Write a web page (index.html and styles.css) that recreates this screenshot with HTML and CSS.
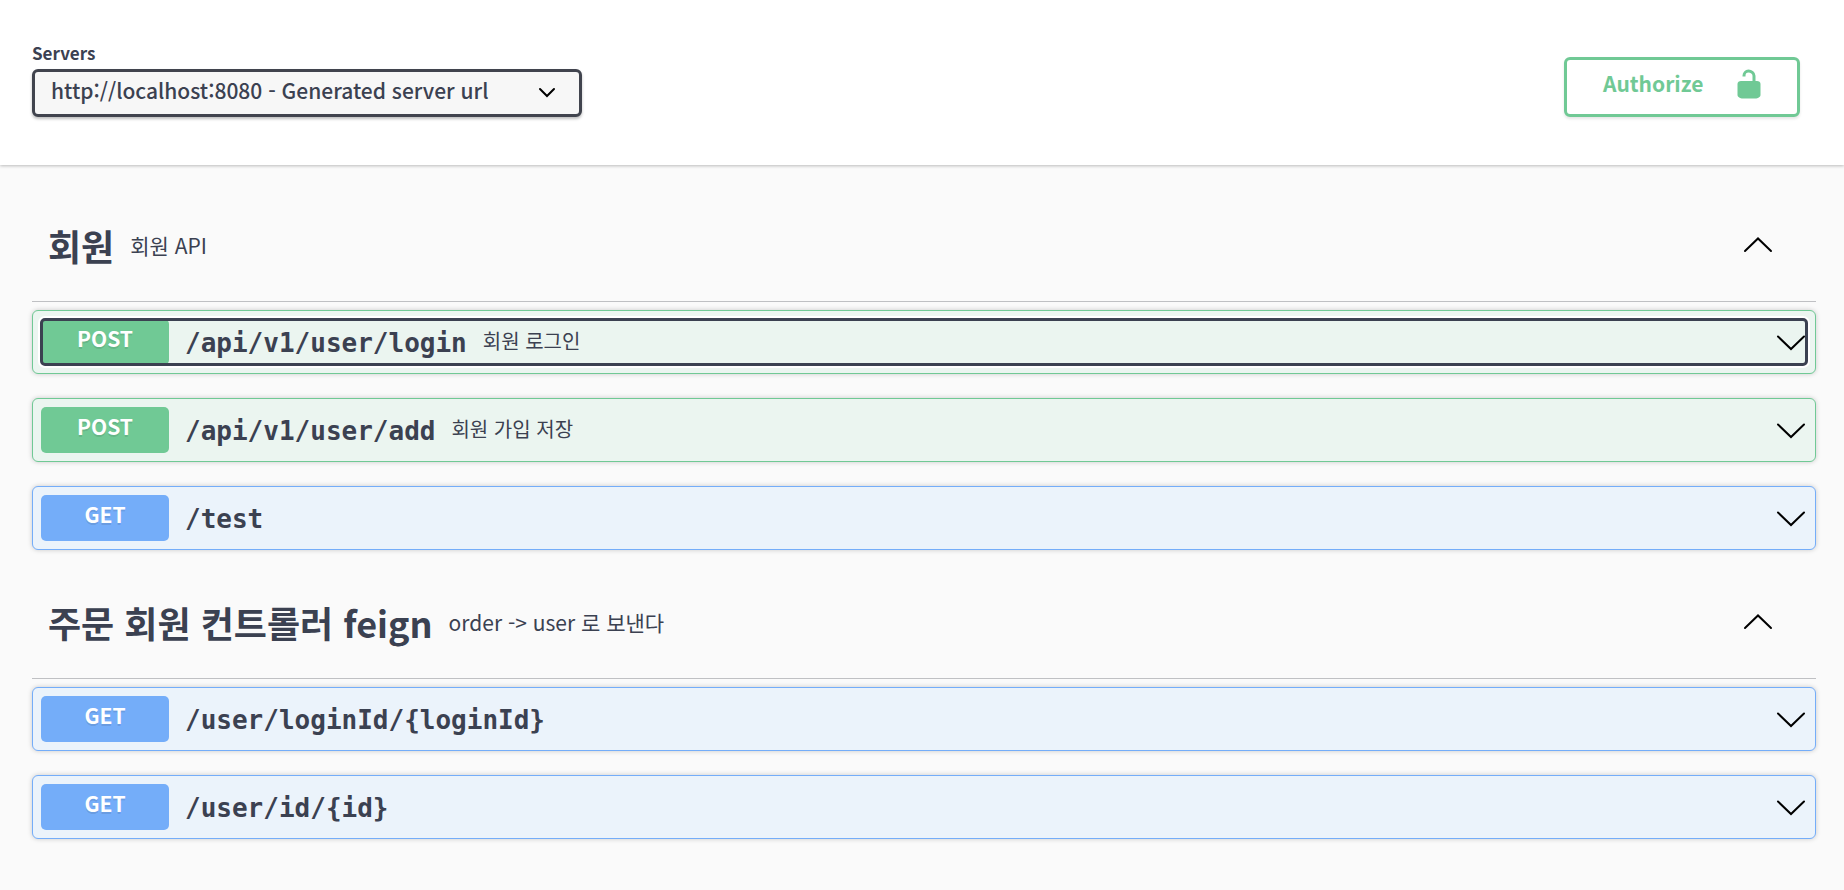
FILE: index.html
```html
<!DOCTYPE html>
<html lang="ko">
<head>
    <meta charset="utf-8">
    <meta name="viewport" content="width=device-width, initial-scale=1">
    <title>Swagger UI</title>
    <link rel="stylesheet" href="styles.css">
</head>
<body>
    <header class="scheme-container">
        <div class="servers">
            <label class="servers-title" for="servers">Servers</label>
            <select id="servers" class="servers-select">
                <option>http://localhost:8080 - Generated server url</option>
            </select>
            <svg class="select-arrow" width="18" height="12" viewBox="0 0 18 12"><path d="M2 2l7 7 7-7"/></svg>
        </div>
        <button class="authorize">
            <span>Authorize</span>
            <svg width="24" height="30" viewBox="0 0 24 30"><path class="shackle" d="M7 7.5v-.8C7 4.200 8.800 2 11.500 2S17 4.200 17 6.700V13"/><path d="M4 12h16c2 0 3.500 1 3.500 3v11c0 2-3 3.500-5 3.500h-13c-2 0-5-1.500-5-3.500V15c0-2 1.500-3 3.500-3z"/></svg>
        </button>
    </header>

    <main class="wrapper">
        <section class="tag-section">
            <h3 class="tag">
                <a href="#" class="tag-name">회원</a>
                <small>회원 API</small>
                <button class="expand" aria-label="Collapse operation"><svg class="arrow" width="30" height="18" viewBox="0 0 30 18"><path d="M2 15l13-12.500 13 12.500"/></svg></button>
            </h3>
            <div class="opblock post">
                <button class="summary focused">
                    <span class="method">POST</span>
                    <span class="path">/api/v1/user/login</span>
                    <span class="description">회원 로그인</span>
                    <svg class="arrow" width="30" height="18" viewBox="0 0 30 18"><path d="M2 3.500l13 12.500 13-12.500"/></svg>
                </button>
            </div>
            <div class="opblock post">
                <button class="summary">
                    <span class="method">POST</span>
                    <span class="path">/api/v1/user/add</span>
                    <span class="description">회원 가입 저장</span>
                    <svg class="arrow" width="30" height="18" viewBox="0 0 30 18"><path d="M2 3.500l13 12.500 13-12.500"/></svg>
                </button>
            </div>
            <div class="opblock get">
                <button class="summary">
                    <span class="method">GET</span>
                    <span class="path">/test</span>
                    <svg class="arrow" width="30" height="18" viewBox="0 0 30 18"><path d="M2 3.500l13 12.500 13-12.500"/></svg>
                </button>
            </div>
        </section>

        <section class="tag-section">
            <h3 class="tag">
                <a href="#" class="tag-name">주문 회원 컨트롤러 feign</a>
                <small>order -&gt; user 로 보낸다</small>
                <button class="expand" aria-label="Collapse operation"><svg class="arrow" width="30" height="18" viewBox="0 0 30 18"><path d="M2 15l13-12.500 13 12.500"/></svg></button>
            </h3>
            <div class="opblock get">
                <button class="summary">
                    <span class="method">GET</span>
                    <span class="path">/user/loginId/{loginId}</span>
                    <svg class="arrow" width="30" height="18" viewBox="0 0 30 18"><path d="M2 3.500l13 12.500 13-12.500"/></svg>
                </button>
            </div>
            <div class="opblock get">
                <button class="summary">
                    <span class="method">GET</span>
                    <span class="path">/user/id/{id}</span>
                    <svg class="arrow" width="30" height="18" viewBox="0 0 30 18"><path d="M2 3.500l13 12.500 13-12.500"/></svg>
                </button>
            </div>
        </section>
    </main>
</body>
</html>
```
FILE: styles.css
```css
* {
    box-sizing: border-box;
}

body {
    margin: 0;
    background: #fafafa;
    color: #3b4151;
    font-family: "Noto Sans CJK KR", "Noto Sans", sans-serif;
}

button {
    font-family: inherit;
    color: inherit;
    cursor: pointer;
}

.scheme-container {
    display: flex;
    justify-content: space-between;
    align-items: flex-start;
    padding: 40px 44px 48px 32px;
    background: #fff;
    box-shadow: 0 1px 3px rgba(0, 0, 0, .25);
}

.servers {
    display: grid;
    grid-template-columns: minmax(0, 550px);
}

.servers-title {
    padding-bottom: 3px;
    font-size: 17px;
    font-weight: 700;
    line-height: 26px;
}

.servers-select {
    grid-area: 2 / 1;
    width: 100%;
    height: 48px;
    padding: 0 60px 6px 16px;
    border: 3px solid #41444e;
    border-radius: 6px;
    background: #f7f7f7;
    box-shadow: 0 2px 3px rgba(0, 0, 0, .25);
    color: #3b4151;
    font-family: inherit;
    font-size: 21px;
    font-weight: 500;
    appearance: none;
}

.select-arrow {
    grid-area: 2 / 1;
    justify-self: end;
    align-self: center;
    margin-right: 26px;
    fill: none;
    stroke: #000;
    stroke-width: 2;
    stroke-linecap: round;
    pointer-events: none;
}

.authorize {
    display: flex;
    justify-content: space-between;
    width: 236px;
    height: 60px;
    margin-top: 17px;
    padding: 9px 36px;
    border: 3px solid #70c995;
    border-radius: 6px;
    background: #fff;
    box-shadow: 0 2px 3px rgba(0, 0, 0, .1);
    color: #70c995;
    font-size: 21px;
    font-weight: 700;
    line-height: 28px;
}

.authorize svg {
    fill: #70c995;
}

.authorize .shackle {
    fill: none;
    stroke: #70c995;
    stroke-width: 3;
}

.wrapper {
    padding: 26px 28px 50px 32px;
}

.tag {
    display: flex;
    align-items: center;
    height: 111px;
    margin: 0 0 8px;
    padding: 0 43px 2px 16px;
    border-bottom: 1px solid #bfc0c3;
    font-size: 36px;
}

.tag-name {
    color: inherit;
    text-decoration: none;
}

.tag small {
    padding: 0 16px;
    font-size: 21px;
    font-weight: 400;
}

.expand {
    display: flex;
    margin-left: auto;
    padding: 0;
    border: 0;
    background: none;
}

.arrow {
    flex: none;
    fill: none;
    stroke: #000;
    stroke-width: 2;
    stroke-linecap: round;
}

.opblock {
    margin-bottom: 24px;
    padding: 8px;
    border: 1px solid #70c995;
    border-radius: 6px;
    background: #ebf5f0;
    box-shadow: 0 0 5px rgba(0, 0, 0, .2);
}

.tag-section + .tag-section {
    margin-top: 18px;
}

.tag-section .opblock:last-child {
    margin-bottom: 0;
}

.summary {
    display: flex;
    align-items: center;
    width: 100%;
    height: 46px;
    padding: 0 1px 0 0;
    border: 0;
    border-radius: 4px;
    background: none;
    text-align: left;
}

.summary.focused {
    outline: 3px solid #3b4151;
    outline-offset: -2px;
    box-shadow: 0 0 0 3px #fff;
}

.summary .arrow {
    margin-left: auto;
}

.method {
    width: 128px;
    height: 46px;
    border-radius: 5px;
    background: #70c995;
    color: #fff;
    font-size: 21px;
    font-weight: 700;
    line-height: 38px;
    text-align: center;
    text-shadow: 0 2px 0 rgba(0, 0, 0, .1);
}

.path {
    padding: 2px 16px 0;
    font-family: "DejaVu Sans Mono", monospace;
    font-size: 26px;
    font-weight: 700;
}

.description {
    padding-bottom: 4px;
    font-size: 20px;
}

.get {
    border-color: #74adf9;
    background: #ebf3fb;
}

.get .method {
    background: #74adf9;
}
```
